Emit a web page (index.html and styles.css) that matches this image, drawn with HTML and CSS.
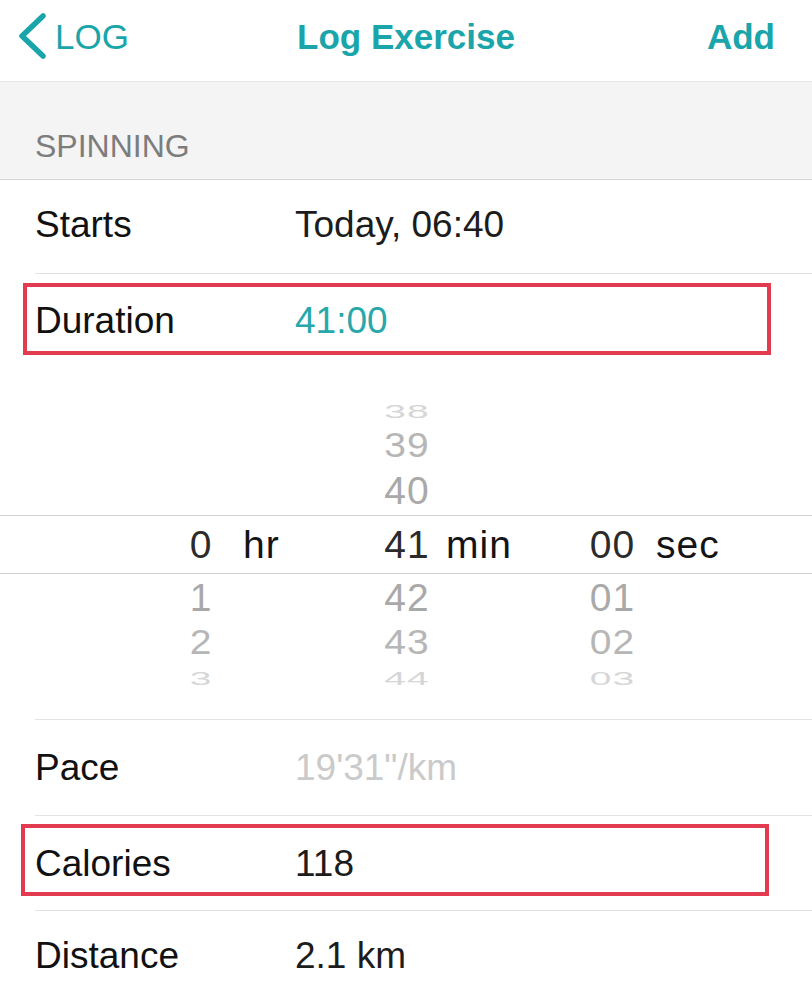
FILE: index.html
```html
<!DOCTYPE html>
<html lang="en">
<head>
<meta charset="utf-8">
<title>Log Exercise</title>
<link rel="stylesheet" href="styles.css">
</head>
<body>
<div class="screen">
  <header class="nav">
    <div class="nav-left">
      <svg class="chev" width="32" height="48" viewBox="0 0 32 48" aria-hidden="true"><polyline points="27,4 6,24 27,44" fill="none" stroke="#19a5aa" stroke-width="5.5" stroke-linecap="round" stroke-linejoin="round"/></svg>
      <span class="back">LOG</span>
    </div>
    <h1 class="title">Log Exercise</h1>
    <div class="nav-right">Add</div>
  </header>

  <div class="section">SPINNING</div>

  <div class="row h93 bordered lift">
    <span class="label">Starts</span>
    <span class="value">Today, 06:40</span>
  </div>
  <div class="row h93 hl hl-duration">
    <span class="label">Duration</span>
    <span class="value teal">41:00</span>
  </div>

  <div class="picker">
    <div class="prow r-a"><span class="num c2 far">38</span></div>
    <div class="prow r-b"><span class="num c2 mid">39</span></div>
    <div class="prow r-c"><span class="num c2 near">40</span></div>
    <div class="prow band">
      <span class="num c1 sel">0</span><span class="lab l1">hr</span>
      <span class="num c2 sel">41</span><span class="lab l2">min</span>
      <span class="num c3 sel">00</span><span class="lab l3">sec</span>
    </div>
    <div class="prow r-d"><span class="num c1 near">1</span><span class="num c2 near">42</span><span class="num c3 near">01</span></div>
    <div class="prow r-e"><span class="num c1 mid">2</span><span class="num c2 mid">43</span><span class="num c3 mid">02</span></div>
    <div class="prow r-f"><span class="num c1 far">3</span><span class="num c2 far">44</span><span class="num c3 far">03</span></div>
  </div>
  <div class="sep"></div>

  <div class="row h95 bordered">
    <span class="label">Pace</span>
    <span class="value muted">19'31"/km</span>
  </div>
  <div class="row h94 bordered hl hl-calories">
    <span class="label">Calories</span>
    <span class="value">118</span>
  </div>
  <div class="row h94 lift">
    <span class="label">Distance</span>
    <span class="value">2.1 km</span>
  </div>
</div>
</body>
</html>
```

FILE: styles.css
```css
* {
  box-sizing: border-box;
}

html, body {
  margin: 0;
  padding: 0;
  background: #ffffff;
}

body {
  font-family: "Liberation Sans", Arial, sans-serif;
  color: #111111;
  overflow: hidden;
}

.screen {
  width: 812px;
  height: 999px;
  overflow: hidden;
}

/* ---------- Navigation bar ---------- */
.nav {
  height: 82px;
  display: grid;
  grid-template-columns: 1fr auto 1fr;
  align-items: center;
  padding: 0 16px 9px 16px;
  border-bottom: 1px solid #e6e6e6;
  color: #19a5aa;
}

.nav-left {
  display: flex;
  align-items: center;
  justify-self: start;
}

.chev {
  display: block;
}

.back {
  margin-left: 7px;
  font-size: 35px;
  line-height: 1;
}

.title {
  margin: 0;
  font-size: 35px;
  font-weight: 700;
  line-height: 1;
}

.nav-right {
  justify-self: end;
  margin-right: 21px;
  font-size: 35px;
  font-weight: 700;
  line-height: 1;
}

/* ---------- Section header ---------- */
.section {
  height: 98px;
  padding: 48px 0 0 35px;
  background: #f4f4f4;
  border-bottom: 1px solid #d6d6d6;
  color: #7d7d7d;
  font-size: 32px;
  line-height: 32px;
}

/* ---------- Rows ---------- */
.row {
  position: relative;
  display: flex;
  align-items: center;
  margin-left: 35px;
  font-size: 37px;
  line-height: 1;
}

.h93 { height: 93px; }
.h94 { height: 94px; }
.h95 { height: 95px; }

.bordered {
  border-bottom: 1px solid #e3e3e3;
}

.bordered.h93 { height: 94px; }
.bordered.h94 { height: 95px; }
.bordered.h95 { height: 96px; }

.lift {
  padding-bottom: 5px;
}

.label {
  width: 260px;
  flex: none;
  color: #111111;
}

.value {
  color: #1c1c1c;
}

.value.teal {
  color: #28a8ab;
}

.value.muted {
  color: #cacaca;
}

/* red annotation boxes drawn over the rows */
.hl::after {
  content: "";
  position: absolute;
  border: 4px solid #e23b4f;
}

.hl-duration::after {
  top: 9px;
  bottom: 12px;
  left: -12px;
  right: 41px;
}

.hl-calories::after {
  top: 8px;
  bottom: 14px;
  left: -14px;
  right: 43px;
}

/* ---------- Duration picker ---------- */
.picker {
  padding: 25px 0 24px;
  font-size: 39px;
  letter-spacing: 1px;
}

.prow {
  display: grid;
  grid-template-columns: 170px 62px 144px 62px 144px 61px 1fr;
  align-items: center;
}

.r-a { height: 32px; }
.r-b { height: 42px; }
.r-c { height: 49px; }
.r-d { height: 47px; }
.r-e { height: 42px; }
.r-f { height: 30px; }
.r-f + .prow { height: 0; }

.band {
  height: 59px;
  border-top: 1px solid #d2d2d2;
  border-bottom: 1px solid #d2d2d2;
}

.num {
  grid-row: 1;
  display: block;
  text-align: center;
  line-height: 1;
}

.lab {
  grid-row: 1;
  display: block;
  line-height: 1;
  color: #141414;
}

.c1 { grid-column: 2; }
.l1 { grid-column: 3; padding-left: 11px; }
.c2 { grid-column: 4; }
.l2 { grid-column: 5; padding-left: 8px; }
.c3 { grid-column: 6; }
.l3 { grid-column: 7; padding-left: 13px; }

.sel {
  color: #2b2b2b;
}

.near {
  color: #a9a9a9;
}

.mid {
  color: #b6b6b6;
  transform: scaleY(0.88);
}

.far {
  color: #d6d6d6;
  transform: scaleY(0.48);
}

.r-f .far {
  margin-top: -4px;
}

.picker {
  padding-bottom: 26px;
}

.sep {
  height: 1px;
  margin-left: 35px;
  background: #e3e3e3;
}
```
